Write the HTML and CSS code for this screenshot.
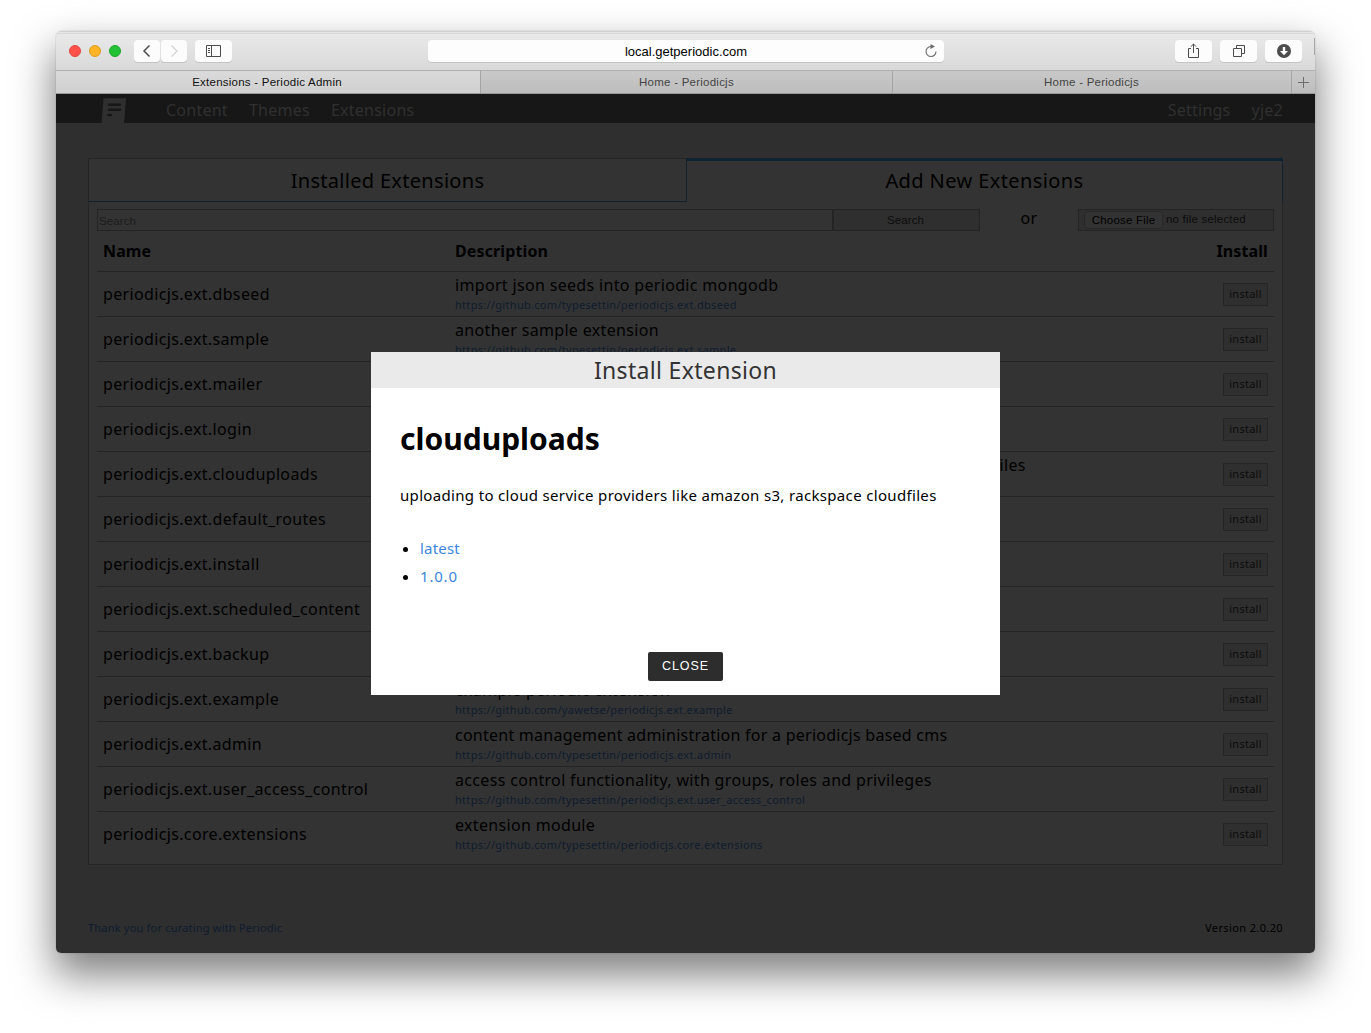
FILE: index.html
```html
<!DOCTYPE html>
<html lang="en">
<head>
<meta charset="utf-8">
<title>Extensions - Periodic Admin</title>
<link rel="stylesheet" href="styles.css">
</head>
<body>
<div class="window">
  <header class="toolbar">
    <div class="lights"><i class="red"></i><i class="amber"></i><i class="green"></i></div>
    <div class="history">
      <button class="tool nav-btn"><svg width="26" height="22" viewBox="0 0 26 22"><path d="M15.500 5.500 10 11l5.500 5.500" fill="none" stroke="#4c4c4c" stroke-width="1.500"/></svg></button>
      <button class="tool nav-btn"><svg width="26" height="22" viewBox="0 0 26 22"><path d="M10.500 5.500 16 11l-5.500 5.500" fill="none" stroke="#d4d4d4" stroke-width="1.300"/></svg></button>
    </div>
    <button class="tool side-btn"><svg width="37" height="22" viewBox="0 0 37 22"><path d="M11.500 5.500h14v11h-14zM16.500 5.500v11M13 8.500h2M13 10.500h2M13 12.500h2" fill="none" stroke="#4c4c4c"/></svg></button>
    <div class="address">local.getperiodic.com
      <svg class="reload" width="14" height="16" viewBox="0 0 14 16"><path d="M7.500 3.500H6.700A5 5 0 1 0 12 8.500" fill="none" stroke="#6c6c6c" stroke-width="1.100"/><path d="M6.500 1v5L11 3.500z" fill="#6c6c6c"/></svg>
    </div>
    <div class="actions">
      <button class="tool"><svg width="37" height="22" viewBox="0 0 37 22"><path d="M16 8.500h-2.500v9h10v-9H21M18.500 13V4M15.800 6.700l2.700-2.700 2.700 2.700" fill="none" stroke="#4c4c4c"/></svg></button>
      <button class="tool"><svg width="37" height="22" viewBox="0 0 37 22"><path d="M13.500 8.500h8v8h-8zM16.500 8V5.500h8v8H22" fill="none" stroke="#4c4c4c"/></svg></button>
      <button class="tool"><svg width="37" height="22" viewBox="0 0 37 22"><circle cx="19" cy="11" r="7" fill="#4c4c4c"/><path d="M17.800 7h2.400v4H23l-4 4.300-4-4.300h2.800z" fill="#fff"/></svg></button>
    </div>
    <i class="edge"></i>
  </header>
  <div class="tabbar">
    <div class="tab tab-active">Extensions - Periodic Admin</div>
    <div class="tab tab-mid">Home - Periodicjs</div>
    <div class="tab tab-last">Home - Periodicjs</div>
    <div class="tab-add"><svg width="11" height="11" viewBox="0 0 11 11"><path d="M5.500 0v11M0 5.500h11" stroke="#6d6d6d"/></svg></div>
  </div>
  <main class="page">
    <nav class="nav">
      <svg class="logo" width="26" height="26" viewBox="0 0 26 26"><path d="M2.500 1.300H25L23 26H.5z" fill="#2f2f2f"/><path d="M8 7.700h11M8 12.700h11M7.500 18h2.500" stroke="#171717" stroke-width="2.400" stroke-linecap="round"/></svg>
      <a>Content</a><a>Themes</a><a>Extensions</a>
      <div class="nav-right"><a>Settings</a><a>yje2</a></div>
    </nav>
    <section class="panel">
      <div class="heads">
        <h2 class="head head-off">Installed Extensions</h2>
        <h2 class="head head-on">Add New Extensions</h2>
      </div>
      <div class="search">
        <div class="field">Search</div><div class="go">Search</div>
        <div class="or">or</div>
        <div class="file"><span class="choose">Choose File</span><span>no file selected</span></div>
      </div>
      <div class="table">
        <div class="row row-head"><b>Name</b><b>Description</b><b>Install</b></div>
        <div class="row"><div class="name">periodicjs.ext.dbseed</div><div class="desc"><p>import json seeds into periodic mongodb</p><a>https://github.com/typesettin/periodicjs.ext.dbseed</a></div><button class="install">install</button></div>
        <div class="row"><div class="name">periodicjs.ext.sample</div><div class="desc"><p>another sample extension</p><a>https://github.com/typesettin/periodicjs.ext.sample</a></div><button class="install">install</button></div>
        <div class="row"><div class="name">periodicjs.ext.mailer</div><div class="desc"></div><button class="install">install</button></div>
        <div class="row"><div class="name">periodicjs.ext.login</div><div class="desc"></div><button class="install">install</button></div>
        <div class="row"><div class="name">periodicjs.ext.clouduploads</div><div class="desc"><p>uploading to cloud service providers like amazon s3, rackspace cloudfiles</p></div><button class="install">install</button></div>
        <div class="row"><div class="name">periodicjs.ext.default_routes</div><div class="desc"></div><button class="install">install</button></div>
        <div class="row"><div class="name">periodicjs.ext.install</div><div class="desc"></div><button class="install">install</button></div>
        <div class="row"><div class="name">periodicjs.ext.scheduled_content</div><div class="desc"></div><button class="install">install</button></div>
        <div class="row"><div class="name">periodicjs.ext.backup</div><div class="desc"></div><button class="install">install</button></div>
        <div class="row"><div class="name">periodicjs.ext.example</div><div class="desc"><p>example periodic extension</p><a>https://github.com/yawetse/periodicjs.ext.example</a></div><button class="install">install</button></div>
        <div class="row"><div class="name">periodicjs.ext.admin</div><div class="desc"><p class="tight">content management administration for a periodicjs based cms</p><a>https://github.com/typesettin/periodicjs.ext.admin</a></div><button class="install">install</button></div>
        <div class="row"><div class="name">periodicjs.ext.user_access_control</div><div class="desc"><p>access control functionality, with groups, roles and privileges</p><a>https://github.com/typesettin/periodicjs.ext.user_access_control</a></div><button class="install">install</button></div>
        <div class="row"><div class="name">periodicjs.core.extensions</div><div class="desc"><p>extension module</p><a>https://github.com/typesettin/periodicjs.core.extensions</a></div><button class="install">install</button></div>
      </div>
    </section>
    <footer class="foot"><a>Thank you for curating with Periodic</a><span class="version">Version 2.0.20</span></footer>
  </main>
  <div class="modal">
    <h3 class="modal-title">Install Extension</h3>
    <div class="modal-body">
      <h1>clouduploads</h1>
      <p class="lead">uploading to cloud service providers like amazon s3, rackspace cloudfiles</p>
      <ul><li><a>latest</a></li><li><a class="number">1.0.0</a></li></ul>
      <button class="close">CLOSE</button>
    </div>
  </div>
</div>
</body>
</html>
```
FILE: styles.css
```css
* { box-sizing: border-box; }
body { margin: 0; width: 1371px; height: 1033px; overflow: hidden; background: #fff; font-family: "Noto Sans", sans-serif; color: #000; }
h1, h2, h3, p, ul { margin: 0; padding: 0; font-weight: 400; }
button { margin: 0; padding: 0; border: 0; font: inherit; color: inherit; letter-spacing: inherit; }
svg { display: block; }

.window { position: relative; width: 1259px; height: 922px; margin: 31px 0 0 56px; border-radius: 6px 6px 5px 5px; box-shadow: 0 0 1px rgba(0,0,0,.5), 0 20px 40px 2px rgba(0,0,0,.5); display: flex; flex-direction: column; }

.toolbar { position: relative; height: 40px; flex: none; display: flex; align-items: center; padding: 1px 13px 1px; border-radius: 6px 6px 0 0; border-bottom: 1px solid #b0b0b0; background: linear-gradient(#d0d0d0 1px, #e6e6e6 1px, #e6e6e6 2px, #d8d8d8 2px, #d8d8d8 3px, #e9e9e9 3px, #d9d9d9); }
.edge { position: absolute; right: 0; top: 7px; width: 1px; height: 17px; background: #a8a8a8; }
.lights { display: flex; gap: 8px; width: 65px; }
.lights i { width: 12px; height: 12px; border-radius: 50%; }
.red { background: #ff5049; border: 1px solid #e14640; }
.amber { background: #fdb324; border: 1px solid #e09e1d; }
.green { background: #23c136; border: 1px solid #1ba82b; }
.tool { width: 37px; height: 22px; border-radius: 4px; background: #fcfcfc; box-shadow: 0 1px #c4c4c4; }
.history { display: flex; gap: 1px; margin-right: 8px; }
.nav-btn { width: 26px; }
.address { position: relative; width: 516px; height: 22px; margin-left: 196px; border-radius: 4px; background: #fdfdfd; box-shadow: 0 1px #c4c4c4; text-align: center; font: 13px/23px "Liberation Sans", sans-serif; }
.reload { position: absolute; right: 6px; top: 3px; }
.actions { display: flex; gap: 8px; margin-left: auto; }

.tabbar { height: 23px; flex: none; display: flex; border-bottom: 1px solid #989898; background: linear-gradient(#c8c8c8, #bdbdbd); font: 11.5px/23px "Liberation Sans", sans-serif; letter-spacing: .24px; color: #444; text-align: center; }
.tab { border-right: 1px solid #a4a4a4; }
.tab-active { width: 425px; padding-right: 2px; background: linear-gradient(#dadada, #d0d0d0); color: #111; }
.tab-mid { width: 412px; }
.tab-last { width: 399px; padding-right: 1px; }
.tab-add { flex: 1; display: flex; align-items: center; justify-content: center; }

.page { flex: 1; background: #2f2f2f; border-radius: 0 0 5px 5px; letter-spacing: .35px; }
.nav { height: 29px; display: flex; padding: 0 32px 0 45px; background: #171717; color: #303030; font-size: 16px; line-height: 32px; letter-spacing: .25px; }
.logo { margin: 3px 39px 0 0; }
.nav a { margin-right: 21px; }
.nav-right { margin-left: auto; }
.nav-right a:last-child { margin-right: 0; }

.panel { width: 1195px; height: 707px; margin: 35px 0 0 32px; border: 1px solid #252525; background: #333; }
.heads { display: flex; height: 44px; margin: -1px -1px 0; }
.head { font-size: 20px; line-height: 43px; text-align: center; letter-spacing: .3px; }
.head-off { width: 598px; border: 1px solid #252525; border-bottom-color: #0f2230; border-right: 0; }
.head-on { width: 597px; border-top: 3px solid #0f2230; border-left: 1px solid #0f2230; border-right: 1px solid #0f2230; line-height: 39px; letter-spacing: .4px; }
.search { display: flex; height: 22px; margin: 7px 8px 0; font: 11.5px/20px "Liberation Sans", sans-serif; letter-spacing: .1px; }
.field { width: 736px; border: 1px solid #242424; padding-left: 1px; line-height: 22px; color: #1c1c1c; }
.go { width: 147px; padding-right: 2px; border: 1px solid #242424; background: #2f2f2f; color: #0c0c0c; text-align: center; }
.or { width: 98px; text-align: center; font: 16px/18px "Noto Sans", sans-serif; letter-spacing: .3px; }
.file { width: 196px; border: 1px solid #242424; background: #2f2f2f; display: flex; padding-left: 5px; gap: 3px; color: #0c0c0c; letter-spacing: .2px; line-height: 19px; }
.choose { height: 18px; margin-top: 1px; line-height: 16px; width: 79px; text-align: center; border: 1px solid #282828; border-radius: 4px; background: #333; color: #000; }

.table { margin: 0 8px; }
.row { height: 45px; display: grid; grid-template-columns: 352px 1fr 60px; align-items: center; padding: 0 6px; border-bottom: 1px solid #242424; font-size: 16px; }
.row:last-child { border-bottom: 0; height: 44px; }
.row-head { height: 41px; letter-spacing: .12px; }
.row-head b:last-child { justify-self: end; }
.desc { align-self: start; padding-top: 3px; white-space: nowrap; }
.desc p { line-height: 20px; letter-spacing: .33px; }
.desc .tight { letter-spacing: .25px; }
.desc a { display: block; margin-top: 1px; font-size: 11px; line-height: 18px; color: #0e1c2f; letter-spacing: .3px; }
.install { justify-self: end; width: 45px; height: 23px; border: 1px solid #252525; background: #2f2f2f; color: #0c0c0c; font-size: 11px; line-height: 20px; padding-bottom: 1px; letter-spacing: .25px; }
.foot { display: flex; justify-content: space-between; margin: 54px 32px 0; font-size: 11px; line-height: 18px; letter-spacing: .2px; }
.foot a { color: #0e1c2f; }
.version { letter-spacing: .38px; }

.modal { position: absolute; left: 315px; top: 321px; width: 629px; height: 343px; background: #fff; letter-spacing: .33px; }
.modal-title { height: 36px; background: #eaeaea; color: #333; text-align: center; font-size: 23px; line-height: 37px; }
.modal-body { display: flex; flex-direction: column; padding: 29px 29px 0; }
.modal-body h1 { font-size: 30px; line-height: 44px; font-weight: 700; letter-spacing: 0; }
.lead { margin-top: 22px; font-size: 15px; line-height: 24px; }
.modal-body ul { margin-top: 27px; padding-left: 20px; font-size: 15px; line-height: 28px; }
.modal-body li a { color: #3e85da; letter-spacing: .2px; }
.modal-body li .number { letter-spacing: .8px; }
.close { align-self: center; width: 75px; height: 29px; margin-top: 62px; border-radius: 2px; background: #2d2d2d; color: #fff; font: 12.5px/29px "Liberation Sans", sans-serif; letter-spacing: .9px; }
```
